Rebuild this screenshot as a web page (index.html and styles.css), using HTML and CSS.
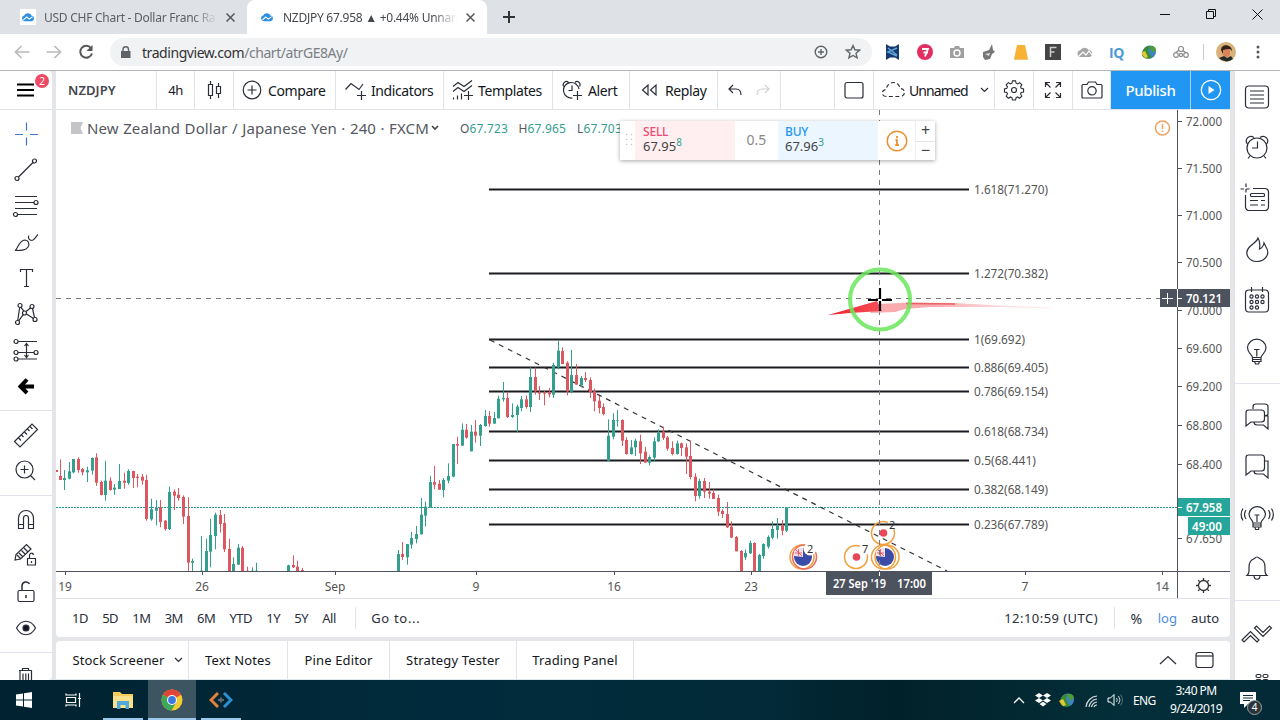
FILE: index.html
```html
<!DOCTYPE html>
<html lang="en">
<head>
    <meta charset="UTF-8">
    <meta name="viewport" content="width=device-width, initial-scale=1.0">
    <title>NZDJPY 67.958 ▲ +0.44% Unnamed</title>
    <link rel="stylesheet" href="styles.css">
</head>
<body>
    <!-- Shared symbols -->
    <svg class="defs" width="0" height="0">
        <symbol id="cloud" viewBox="0 0 16 12">
            <path d="M4 11a3.4 3.4 0 0 1-.6-6.7A4.8 4.8 0 0 1 12.200 4.300 3.400 3.400 0 0 1 12.500 11z" fill="#2f8fe0"/>
            <path d="M2.500 9.500l4-3.500 3 2.500 4-3" fill="none" stroke="#fff" stroke-width="1.300"/>
        </symbol>
        <symbol id="idm" viewBox="0 0 16 16">
            <circle cx="8.500" cy="8" r="6.500" fill="#3d86c6"/>
            <path d="M1 10c0-5 4-8 8-8L7 7l4 7c-5 2-10 0-10-4z" fill="#3c8b34"/>
            <path d="M8 2c4-1 7 1 7 4l-4 3z" fill="#4c9b3c"/>
            <path d="M0 9l4-2 3 6-3 1z" fill="#e5c932"/>
        </symbol>
    </svg>

    <div class="tab-strip">
        <div class="tab">
            <span class="favicon"><svg width="14" height="10"><use href="#cloud"/></svg></span>
            <span class="tab-title">USD CHF Chart - Dollar Franc Rate</span>
            <svg class="close" width="9" height="9"><path d="M.5.5l8 8M8.500.5l-8 8"/></svg>
        </div>
        <div class="tab active">
            <span class="favicon"><svg width="14" height="10"><use href="#cloud"/></svg></span>
            <span class="tab-title">NZDJPY 67.958 ▲ +0.44% Unnamed</span>
            <svg class="close" width="9" height="9"><path d="M.5.5l8 8M8.500.5l-8 8"/></svg>
        </div>
        <svg class="new-tab" width="12" height="12"><path d="M6 0v12M0 6h12"/></svg>
        <div class="window-buttons">
            <svg width="11" height="11"><path d="M0 5.500h10"/></svg>
            <svg width="11" height="11"><path d="M.5 2.500h7v7h-7zM2.500 2.500v-2h7v7h-2"/></svg>
            <svg width="11" height="11"><path d="M.5.500l10 10M10.500.500l-10 10"/></svg>
        </div>
    </div>

    <div class="address-bar">
        <svg class="nav dim" width="16" height="14"><path d="M15.500 7H2M7.500 1L1.500 7l6 6"/></svg>
        <svg class="nav dim" width="16" height="14"><path d="M.5 7H14M8.500 1l6 6-6 6"/></svg>
        <svg class="nav" width="16" height="16"><path d="M13 4A6 6 0 1 0 14 9.500" stroke-width="2"/><path d="M14.500 1v6h-6z" fill="#555" stroke="none"/></svg>
        <div class="url">
            <svg width="10" height="13"><path d="M0 5h9.500v7H0z" fill="#5f6368"/><path d="M2 6V3.500a2.700 2.700 0 0 1 5.500 0V6" fill="none" stroke="#5f6368" stroke-width="1.400"/></svg>
            <span class="address">tradingview.com<span>/chart/atrGE8Ay/</span></span>
            <svg class="zoom-icon" width="14" height="14"><circle cx="7" cy="7" r="5.800"/><path d="M7 4v6M4 7h6"/></svg>
            <svg class="star" width="16" height="16"><path d="M8 1.500l1.900 4.300 4.700.4-3.600 3.100 1.100 4.600L8 11.500l-4.100 2.400L5 9.300 1.400 6.200l4.700-.4z"/></svg>
        </div>
        <div class="extensions">
            <svg width="16" height="16"><path d="M1 0l4 2.500h5L14 0v16l-4-2.500H5L1 16z" fill="#163a6b"/><path d="M3 4l9 7M12 4L3 8l9 4" fill="none" stroke="#5fa3dc" stroke-width="1.500"/></svg>
            <svg width="16" height="16"><circle cx="8" cy="8" r="8" fill="#e22f62"/><path d="M5 5h6L8 12.500M6.500 8.500h4.500" fill="none" stroke="#fff" stroke-width="1.800"/></svg>
            <svg width="16" height="16"><path d="M1 4h4l1-2h4l1 2h4v10H1z" fill="#a0a0a0"/><circle cx="8" cy="9" r="3" fill="none" stroke="#fff" stroke-width="1.400"/></svg>
            <svg width="16" height="16"><path d="M2 8l6-2 3-6 1 6 2 2-3 2-2 5-5 1-2-3z" fill="#777"/><path d="M4 10l5-1-1 3z" fill="#ddd"/></svg>
            <svg width="16" height="16"><path d="M4 1h8l3 14H1z" fill="#f9b233"/><path d="M1 15.500h14" stroke="#e9c37a"/></svg>
            <svg width="16" height="16"><path d="M0 0h16v16H0z" fill="#444"/><path d="M5.500 13V3.500h6M5.500 8h4" fill="none" stroke="#ccc" stroke-width="1.500"/></svg>
            <svg width="16" height="16"><path d="M3.500 13a3.400 3.400 0 0 1-.3-6.700A5 5 0 0 1 12 6.300 3.400 3.400 0 0 1 12.500 13z" fill="#a5a5a5"/><path d="M2 12l4-4 3 3 3-4 3 4" fill="none" stroke="#fff" stroke-width="1.200"/></svg>
            <span class="iq">IQ</span>
            <svg width="16" height="16"><use href="#idm"/></svg>
            <svg width="16" height="16"><g fill="none" stroke="#8d8d8d" stroke-width="1.200"><circle cx="3" cy="11" r="2.300"/><circle cx="8" cy="5" r="2.500"/><circle cx="8" cy="11" r="1.600"/><circle cx="13" cy="11" r="2.300"/><path d="M3 8.500l3-2.500M10 6.500l3 2.500"/></g></svg>
        </div>
        <i class="divider"></i>
        <svg class="avatar" width="20" height="20"><circle cx="10" cy="10" r="10" fill="#d9b27a"/><path d="M5 8c0-7 11-6 11 1l-2-2-6 1-1 4z" fill="#33231b"/><path d="M7 8l7-1v6l-4 3-3-3z" fill="#d88458"/><path d="M3 16l5-2 3 2 4-2 2 3a10 10 0 0 1-14-1z" fill="#232b2c"/></svg>
        <svg class="dots" width="4" height="14"><circle cx="2" cy="2" r="1.500"/><circle cx="2" cy="7" r="1.500"/><circle cx="2" cy="12" r="1.500"/></svg>
    </div>

    <main class="app">
        <!-- Drawing tools -->
        <aside class="tools">
            <div class="menu">
                <svg width="20" height="16"><path d="M1 2.500h17M1 8h17M1 13.500h17" stroke-width="2.200"/></svg>
                <span class="menu-badge">2</span>
            </div>
            <div class="tool-group">
                <svg viewBox="0 0 28 28" class="blue"><path d="M14.500 2.500v8M14.500 17.500v8M3 14.500h8M18 14.500h8"/></svg>
                <svg viewBox="0 0 28 28"><circle cx="5" cy="22.500" r="2"/><circle cx="22.500" cy="5" r="2"/><path d="M6.500 21L21 6.500"/></svg>
                <svg viewBox="0 0 28 28"><path d="M3 4.500h22M3 10.500h19M3 16.500h22M6 22.500h19"/><circle cx="24" cy="10.500" r="2"/><circle cx="3.500" cy="22.500" r="2"/></svg>
                <svg viewBox="0 0 28 28"><path d="M3 22.500c3-1 3-9 9.500-10.500 4 0 5.500 4 3.500 7s-5 3.500-13 3.500zM17 7.500c-1.500 2 0 5 3 5 2 0 3-3 6-6"/></svg>
                <svg viewBox="0 0 28 28"><path d="M8.500 8V5.500h12V8M14.500 5.500v17M12 22.500h5"/></svg>
                <svg viewBox="0 0 28 28"><circle cx="8" cy="5.500" r="2"/><circle cx="20" cy="6.500" r="2"/><circle cx="12.500" cy="13" r="2"/><circle cx="5.500" cy="22.500" r="2"/><circle cx="23" cy="19.500" r="2"/><path d="M7.700 7.500l-2 13M9 7.300l3 4M14 11.500l4.500-3.500M20.500 8.500l2 9M14.500 14l7 4.500M11.200 14.600l-4.500 6.200"/></svg>
                <svg viewBox="0 0 28 28"><circle cx="4" cy="5.500" r="2"/><circle cx="24" cy="16.500" r="2"/><circle cx="4" cy="16.500" r="2"/><circle cx="4" cy="23" r="2"/><path d="M6 5.500h19M6 16.500h16M6 23h19M14.500 8v13M12.500 10l2-2.500 2 2.500M12.500 19l2 2.500 2-2.500"/></svg>
                <svg viewBox="0 0 28 28" class="bold"><path d="M22 14.500H9M15 7.500L8.500 14.500l6.500 6.500"/></svg>
            </div>
            <div class="tool-group">
                <svg viewBox="0 0 28 28"><path d="M2.500 20.500L20 3l5.500 5.500L8 26zM6.500 17l2.500 2.500M9.500 14l2 2M12.500 11l2.500 2.500M15.500 8l2 2M18 5.500l2.500 2.500"/></svg>
                <svg viewBox="0 0 28 28"><circle cx="12.500" cy="12.500" r="8.500"/><path d="M18.500 18.500l4.500 4.500M12.500 8.500v8M8.500 12.500h8"/></svg>
            </div>
            <div class="tool-group">
                <svg viewBox="0 0 28 28"><path d="M6.500 22.500V12a7.500 7.500 0 0 1 15 0v10.500h-5V12a2.500 2.500 0 0 0-5 0v10.500zM6.500 18.500h5M16.500 18.500h5"/></svg>
                <svg viewBox="0 0 28 28"><path d="M3 18l1-5.500L14.500 2.500l4.500 4.500L8.500 17zM5 13l4 4M7 11l4 4M9.500 8.500l4 4M12 6l4 4"/><path d="M15.500 16.500h8v6.500h-8zM17.500 16.500v-3a2 2 0 0 1 4-.5M19.500 19v2"/></svg>
                <svg viewBox="0 0 28 28"><rect x="6" y="12.500" width="16" height="11" rx="1.500"/><path d="M10 12.500V8a4 4 0 0 1 7.500-2M14 17v3" stroke-width="1.500"/></svg>
                <svg viewBox="0 0 28 28"><path d="M4.500 14c5-9 14-9 19 0-5 9-14 9-19 0z"/><circle cx="14" cy="14" r="3" fill="#131722"/></svg>
            </div>
            <div class="tool-group">
                <svg viewBox="0 0 28 28"><path d="M7 7.500h13M10.500 7V5.500h6V7M8 7.500v16h11.500v-16M11 10.500v11M13.800 10.500v11M16.500 10.500v11"/></svg>
            </div>
        </aside>

        <section class="center">
            <div class="toolbar">
                <div class="item symbol">NZDJPY</div>
                <div class="item interval">4h</div>
                <div class="item style">
                    <svg width="16" height="20"><path d="M2.500 4.500h4v11h-4zM4.500 1v3.500M4.500 15.500V19M10.500 6.500h4v7h-4zM12.500 3v3.500M12.500 13.500V18"/></svg>
                </div>
                <div class="item compare">
                    <svg width="20" height="20"><circle cx="10" cy="10" r="8.800"/><path d="M10 5.500v9M5.500 10h9"/></svg>Compare
                </div>
                <div class="item indicators">
                    <svg width="22" height="20"><path d="M.5 9.500l5.500-6 8 6 4-5.500M12 15.500h9M16.500 11v9"/></svg>Indicators
                </div>
                <div class="item templates">
                    <svg width="22" height="20"><path d="M1 6.500l5-4 6 4 8-6M1 11.500l5-4 6 4 8-6M12 15.500h9M16.500 11v9M1.500 17.500v2M5.500 15.500v4M9.500 13.500v6"/></svg>Templates
                </div>
                <div class="item alert">
                    <svg width="22" height="20"><path d="M10.500 18A7.800 7.800 0 1 1 17 9M10 5.500v5H6.500M1.500 6.500C0 3 4 0 6.500 2.500M13 2.500c2.500-2.500 6.500.5 4.500 4M11 15.500h9M15.500 11v9"/></svg>Alert
                </div>
                <div class="item replay">
                    <svg width="17" height="14"><path d="M7 2v10L1.500 7zM15 2v10L9.500 7z"/></svg>Replay
                </div>
                <div class="item history">
                    <svg width="14" height="12"><path d="M5 1L1 5l4 4M1.500 5H8c3 0 5 2 5 6"/></svg>
                    <svg width="14" height="12" class="disabled"><path d="M9 1l4 4-4 4M12.500 5H6c-3 0-5 2-5 6"/></svg>
                </div>
                <div class="item spacer"></div>
                <div class="item icon"><svg width="20" height="18"><rect x="1" y="1.500" width="18" height="15.500" rx="2"/></svg></div>
                <div class="item layout">
                    <svg width="25" height="18"><path d="M5 15.500C0 15 0 9 5 8.500 6 4 9 1.500 12.500 1.500s6 2.500 6.500 6c6 0 6 8 0 8z" stroke-dasharray="4 2.500"/></svg>Unnamed
                    <svg class="chev" width="9" height="6"><path d="M1 1l3.500 3.500L8 1"/></svg>
                </div>
                <div class="item icon"><svg width="22" height="22"><circle cx="11" cy="11" r="2.500"/><path d="M9.300 1.500h3.400l.6 2.600 1.600.7 2.300-1.400 2.400 2.400-1.400 2.300.7 1.600 2.600.6v3.400l-2.600.6-.7 1.600 1.400 2.300-2.400 2.400-2.300-1.400-1.600.7-.6 2.600H9.300l-.6-2.600-1.600-.7-2.300 1.400-2.400-2.400 1.400-2.300-.7-1.600-2.600-.6v-3.400l2.600-.6.7-1.600-1.400-2.300 2.400-2.400 2.300 1.400 1.600-.7z" transform="translate(1 .500) scale(.91)"/></svg></div>
                <div class="item icon"><svg width="18" height="18"><path d="M1.500 6V1.500H6M1.500 1.500L6.500 6.500M12 1.500h4.500V6M16.500 1.500l-5 5M1.500 12v4.500H6M1.500 16.500l5-5M12 16.500h4.500V12M16.500 16.500l-5-5"/></svg></div>
                <div class="item icon last"><svg width="22" height="18"><path d="M1 4.500q0-1 1-1h4L7.500 1h7L16 3.500h4q1 0 1 1V16q0 1-1 1H2q-1 0-1-1z"/><circle cx="11" cy="9.800" r="4.200"/></svg></div>
                <div class="publish">Publish</div>
                <div class="play"><svg width="22" height="22"><circle cx="11" cy="11" r="9.700" fill="none" stroke="#fff" stroke-width="1.300"/><path d="M8.500 7l6 4-6 4z" fill="#fff"/></svg></div>
            </div>

            <div class="chart">
                <svg class="plot" viewBox="56 110 1174 488" width="1174" height="488">
                    <defs>
                        <linearGradient id="tip"><stop offset="0" stop-color="#f0202c"/><stop offset="1" stop-color="#f6505a"/></linearGradient>
                        <linearGradient id="trail"><stop offset="0" stop-color="#f58f92"/><stop offset=".35" stop-color="#f88d92"/><stop offset="1" stop-color="#fcc9c9" stop-opacity=".4"/></linearGradient>
                        <g id="nz"><circle r="9" fill="#3b4ba8"/><path d="M-9-1V-6l6-3H0V0z" fill="#f3dfe4"/><path d="M-8-4h7M-4.500-8v7M-7-7l6 6" stroke="#dc4a60" stroke-width=".8"/><circle cx="-9" cy="-1" r=".01"/></g>
                    </defs>
                    <line x1="56" x2="1177" y1="507.500" y2="507.500" class="last-line"/>
                    <g id="fib"></g>
                    <path class="trend" d="M490 340L947 571"/>
                    <g id="candles"></g>

                    <g class="events">
                        <circle cx="802" cy="557" r="12" class="ring"/><circle cx="804.500" cy="557" r="12" class="ring red"/>
                        <use href="#nz" x="803" y="557"/><circle cx="810" cy="549" r="6.500" class="clear"/><text x="807" y="553">2</text>
                        <circle cx="856" cy="557" r="11.500" class="ring"/><circle cx="856.500" cy="557" r="3.800" class="sun"/>
                        <circle cx="865" cy="549" r="6" class="clear"/><text x="862" y="553">7</text>
                        <circle cx="883" cy="533" r="11.500" class="ring"/><circle cx="883.500" cy="533" r="3.800" class="sun"/>
                        <circle cx="892" cy="525" r="5" class="clear"/><path d="M887 524.500h10" class="fib-line"/><text x="889" y="529">2</text>
                        <circle cx="883.500" cy="557" r="12" class="ring"/><circle cx="887" cy="557" r="12" class="ring"/><use href="#nz" x="885" y="557"/>
                    </g>

                    <!-- Crosshair and pointer -->
                    <path class="cross" d="M879.500 110V571M56 298.500H1160"/>
                    <path d="M878 304L910 302.500 955 303 1000 305.500 1050 307.500V308.500L1000 307 930 307 905 309 895 312 870 313z" fill="url(#trail)" fill-opacity=".75"/>
                    <path d="M828 315L877 301 882 311 850 313z" fill="url(#tip)"/>
                    <path d="M906 303.500l49 .5" stroke="#e8606a" stroke-width="1.500"/>
                    <circle cx="880" cy="299.500" r="30" class="halo"/>
                    <path d="M880 288v23M868 300h24" stroke="#000" stroke-width="2.200"/><path d="M878 300h4" stroke="#fff" stroke-width="2"/>

                    <path class="axis" d="M56 571.500H1230M1177.500 110V598"/>
                    <g id="price-axis"></g>
                    <g id="time-axis"></g>

                    <rect x="1160" y="289" width="70" height="18" fill="#4c525e"/>
                    <path d="M1162 298.500h11M1167.500 293v11M1178 298.500h4" stroke="#fff"/><path d="M1177.500 289v18" stroke="#fff"/>
                    <text class="tag" x="1186" y="302.500" textLength="36" lengthAdjust="spacingAndGlyphs">70.121</text>
                    <rect x="1178" y="498" width="52" height="18" fill="#26a69a"/><path d="M1178 507.500h4" stroke="#fff"/>
                    <text class="tag" x="1186" y="511.500" textLength="36" lengthAdjust="spacingAndGlyphs">67.958</text>
                    <rect x="1188" y="517" width="42" height="18" fill="#26a69a"/>
                    <text class="tag" x="1192" y="530.500" textLength="30" lengthAdjust="spacingAndGlyphs">49:00</text>
                    <rect x="826" y="572" width="106" height="23" fill="#4c525e"/><path d="M879.500 572v4" stroke="#fff"/>
                    <text class="tag" x="833" y="588" textLength="53" lengthAdjust="spacingAndGlyphs">27 Sep '19</text>
                    <text class="tag" x="897" y="588" textLength="29" lengthAdjust="spacingAndGlyphs">17:00</text>

                    <g class="sun-icon"><circle cx="1203.500" cy="585.500" r="5"/><path d="M1203.500 578v2M1203.500 591v2M1196 585.500h2M1209 585.500h2M1198.200 580.200l1.400 1.400M1207.400 589.400l1.400 1.400M1208.800 580.200l-1.400 1.400M1199.600 589.400l-1.400 1.400"/></g>
                    <circle cx="1162.500" cy="128" r="7" class="warn"/><path d="M1162.500 124v5M1162.500 130.500v1.500" class="warn"/>
                </svg>

                <div class="legend">
                    <span class="flag"></span>
                    <span class="pair">New Zealand Dollar / Japanese Yen · 240 · FXCM</span>
                    <svg width="8" height="6"><path d="M1 1l3 3 3-3" fill="none" stroke="#444" stroke-width="1.600"/></svg>
                    <span class="ohlc">O<b>67.723</b></span>
                    <span class="ohlc">H<b>67.965</b></span>
                    <span class="ohlc cut">L<b>67.703</b></span>
                </div>

                <div class="order-panel">
                    <div class="grip"></div>
                    <div class="side sell"><span>SELL</span><div>67.95<sup>8</sup></div></div>
                    <div class="qty">0.5</div>
                    <div class="side buy"><span>BUY</span><div>67.96<sup>3</sup></div></div>
                    <div class="info"><svg width="22" height="22"><circle cx="11" cy="11" r="9.800" fill="none" stroke="#ef8e2f" stroke-width="1.500"/><path d="M11 6v2.200M11 9.500V15M9.500 10h1.500M9.300 15h3.600" stroke="#ef8e2f" stroke-width="1.800"/></svg></div>
                    <div class="steps"><span>+</span><span>−</span></div>
                </div>
            </div>

            <div class="ranges">
                <span>1D</span><span>5D</span><span>1M</span><span>3M</span><span>6M</span><span>YTD</span><span>1Y</span><span>5Y</span><span>All</span>
                <i class="after-all"></i>
                <span class="goto">Go to...</span>
                <span class="utc">12:10:59 (UTC)</span>
                <i></i>
                <span class="percent">%</span><span class="log">log</span><span class="auto">auto</span>
            </div>

            <div class="panels">
                <div class="panel screener">Stock Screener <svg width="9" height="6"><path d="M1 1l3.500 3.500L8 1"/></svg></div>
                <div class="panel notes">Text Notes</div>
                <div class="panel pine">Pine Editor</div>
                <div class="panel tester">Strategy Tester</div>
                <div class="panel trading">Trading Panel</div>
                <div class="panel-actions">
                    <svg width="18" height="10"><path d="M1 9l8-7.500L17 9"/></svg>
                    <svg width="19" height="18"><rect x="1" y="1.500" width="17" height="15" rx="2.500"/><path d="M1 5h17"/></svg>
                </div>
            </div>
        </section>

        <!-- Widget bar -->
        <aside class="widgets">
            <div class="widget-group">
                <svg viewBox="0 0 28 28"><rect x="2.500" y="3" width="23" height="22" rx="3.500"/><path d="M7 8h14M7 12h14M7 16h14M7 20h14"/></svg>
                <svg viewBox="0 0 28 28"><circle cx="14" cy="14" r="10"/><path d="M14.500 7.500V14H9M4.500 10C1 6 6 0 11 3.500M17 3.500c5-3.500 10 2.500 6.500 6.500M7 22l-2 2.500M21 22l2 2.500"/></svg>
                <svg viewBox="0 0 28 28"><path d="M3-1.500v11M-2.500 4h11" stroke-dasharray="3.500 2"/><path d="M10 3.500h12a3.500 3.500 0 0 1 3.500 3.500v15a3.500 3.500 0 0 1-3.500 3.500H6A3.500 3.500 0 0 1 2.500 22V10"/><rect x="7.500" y="8.500" width="14" height="3" rx="1"/><path d="M7 15.500h8M18 15.500h4M7 20h8M18 20h4"/></svg>
                <svg viewBox="0 0 28 28"><path d="M15 2C14 6 9 8 6 11.500c-5 6-.5 14 8 14s13.500-8 9-14.500l-2-4c-.5 3-2 5-4.500 6 .5-3 1-7-1.500-11z"/></svg>
                <svg viewBox="0 0 28 28"><rect x="2.500" y="3" width="23" height="22" rx="3.500"/><path d="M8.500 0v5M19.500 0v5"/><g><circle cx="8.500" cy="9.500" r="1.600"/><circle cx="14" cy="9.500" r="1.600"/><circle cx="19.500" cy="9.500" r="1.600"/><circle cx="8.500" cy="15" r="1.600"/><circle cx="14" cy="15" r="1.600"/><circle cx="19.500" cy="15" r="1.600"/><circle cx="8.500" cy="20.500" r="1.600"/><circle cx="14" cy="20.500" r="1.600"/></g></svg>
                <svg viewBox="0 0 28 28"><path d="M9.500 19.500c0-3-5-4-5-10a9.300 9.300 0 0 1 18.500 0c0 6-5 7-5 10zM9.500 19.500v4h8.500v-4M9.500 21.500H18M11.500 23.500l1 2.500h3l1-2.500M11 11.500h5.500M13.800 11.500v7"/></svg>
            </div>
            <div class="widget-group">
                <svg viewBox="0 0 28 28"><path d="M10 7V5q0-3 3-3h9q3 0 3 3v7q0 1.500-3 1.500h-1M5.500 8h13q3 0 3 3v6q0 3-3 3H8l-5 4V11q0-3 2.500-3zM21.500 14h3.500v13l-4.500-4H14q-3 0-3-3"/></svg>
                <svg viewBox="0 0 28 28"><path d="M5.500 2h13q3 0 3 3v10q0 3-3 3H8l-5 4V5q0-3 2.500-3zM21.500 8h3.500v17l-4.500-4H14q-3 0-3-3"/></svg>
                <svg viewBox="0 0 32 28" class="wide"><path d="M12 19c0-3-4-4-4-9a8.300 8.300 0 0 1 16.500 0c0 5-4.500 6-4.500 9zM12 19v4h8v-4M12 21h8M14 23l.5 2.500h3L18 23M13.500 11h5M16 11v7M5 6c-2 3-2 6 0 9M2 4.500c-2.500 4-2.500 8 0 12M27.500 6c2 3 2 6 0 9M30.500 4.500c2.500 4 2.500 8 0 12"/></svg>
                <svg viewBox="0 0 28 28"><path d="M4 20.500q2-1.500 2-4.500v-4c0-6 4-8 5.500-8.500q2.500-3 5 0C18 4 22 6 22 12v4q0 3 2 4.500zM11 20.500c0 5 6 5 6 0"/></svg>
            </div>
            <div class="widget-group">
                <svg viewBox="0 0 32 28" class="wide"><path d="M1 21l8.500-8.500L18 21l-2 2-6.500-6.500L3 23zM13.500 9l2-2 6.500 6.500L28.500 7l2 2-8.500 8.500z"/></svg>
                <svg viewBox="0 0 28 28"><rect x="13" y="4.500" width="5" height="3" rx="1.500"/><rect x="20" y="4.500" width="5" height="3" rx="1.500"/><rect x="13" y="9.500" width="5" height="3" rx="1.500"/><rect x="20" y="9.500" width="5" height="3" rx="1.500"/></svg>
            </div>
        </aside>
    </main>

    <footer class="taskbar">
        <div class="task"><svg width="16" height="16"><path d="M0 2.500l7-1v6H0zM8 1.300L16 0v7.500H8zM0 8.500h7v6l-7-1zM8 8.500h8V16l-8-1.300z" fill="#fff"/></svg></div>
        <div class="task"><svg width="17" height="16"><path d="M1 1.500V3h10V1.500M1 14.500V13h10v1.500M1.500 5.500h9v5h-9zM14.500 1v14M13 6.500h3" fill="none" stroke="#fff" stroke-width="1.200"/></svg></div>
        <div class="task open"><svg width="22" height="20"><path d="M1 2h7l2 2h11v14H1z" fill="#f3cc5c"/><path d="M1 6h20v12H1z" fill="#fbe08c"/><path d="M5 19v-8h12v8h-3.500v-4h-5v4z" fill="#4fa9dc"/></svg></div>
        <div class="task open current"><svg width="22" height="22"><circle cx="11" cy="11" r="10.500" fill="#f5c930"/><path d="M11 11L1.900 5.750A10.500 10.500 0 0 1 20.100 5.750L11 6z" fill="#e0453a"/><path d="M11 11L1.900 5.750A10.500 10.500 0 0 0 10.500 21.500L15.500 13z" fill="#3fa757"/><path d="M20.100 5.750H11V11z" fill="#e0453a"/><circle cx="11" cy="11" r="5" fill="#fff"/><circle cx="11" cy="11" r="3.900" fill="#3b78e0"/></svg></div>
        <div class="task open"><svg width="24" height="18"><path d="M9 2L2 9l7 7" fill="none" stroke="#e4803a" stroke-width="3"/><path d="M15 2l7 7-7 7" fill="none" stroke="#2d8fd0" stroke-width="3"/><path d="M9 9h6M12 6.500v5" stroke="#62676c" stroke-width="2"/></svg></div>
        <div class="tray">
            <svg width="12" height="8"><path d="M1 7l5-5 5 5" fill="none" stroke="#fff" stroke-width="1.300"/></svg>
            <svg width="16" height="14"><path d="M4 0l4 2.500L4 5 0 2.500zM12 0l4 2.500L12 5 8 2.500zM4 5l4 2.500L4 10 0 7.500zM12 5l4 2.500-4 2.500-4-2.500zM8 8.700l3.500 2.300L8 13.500 4.500 11z" fill="#fff"/></svg>
            <svg width="16" height="16"><use href="#idm"/></svg>
            <svg width="16" height="16"><path d="M3 15A12 12 0 0 1 14 4M6 15A9 9 0 0 1 14 7M8.500 15A6.500 6.500 0 0 1 14 10M11 15a3 3 0 0 1 3-2" fill="none" stroke="#d5dde0" stroke-width="1.200"/></svg>
            <svg width="16" height="14"><path d="M1 5h2.500L7 1.500v11L3.500 9H1z" fill="none" stroke="#fff"/><path d="M9.500 5q1.500 2 0 4M11.500 3q3 4 0 8" fill="none" stroke="#cdd6da"/><path d="M13.500 1.500q4 5.500 0 11" fill="none" stroke="#56707a"/></svg>
            <span class="lang">ENG</span>
            <div class="clock"><div>3:40 PM</div><div>9/24/2019</div></div>
            <div class="notifications">
                <svg width="17" height="17"><path d="M0 0h16v12h-8l-4 4v-4H0z" fill="#fff"/><path d="M3 3.500h10M3 6h10M3 8.500h7" stroke="#0b2c38"/></svg>
                <span>4</span>
            </div>
        </div>
    </footer>

    <script src="script.js"></script>
</body>
</html>
```

FILE: styles.css
```css
:root {
    --text: #131722;
    --line: #e0e3eb;
    --gap: #e3e5e8;
    --green: #33a08f;
    --red: #dc5860;
    --blue: #2196f3;
    --ui: "Noto Sans", "Open Sans", sans-serif;
}

* {
    margin: 0;
    padding: 0;
    box-sizing: border-box;
}

body {
    width: 1280px;
    height: 720px;
    display: flex;
    flex-direction: column;
    overflow: hidden;
    font-family: var(--ui);
    font-size: 13px;
    color: var(--text);
    background: #fff;
}

svg {
    flex: none;
    display: block;
}

.defs {
    position: absolute;
}

/* Browser tabs */
.tab-strip {
    flex: none;
    height: 34px;
    display: flex;
    background: #dee1e6;
}

.tab {
    width: 240px;
    padding: 0 12px 0 12px;
    display: flex;
    align-items: center;
    color: #5b5e62;
    font-size: 12px;
}

.tab:first-child {
    width: 247px;
    padding-left: 20px;
}

.tab.active {
    background: #fff;
    border-radius: 8px 8px 0 0;
    color: #45484c;
}

.favicon {
    flex: none;
    width: 16px;
    height: 16px;
    margin-right: 8px;
    display: flex;
    align-items: center;
    justify-content: center;
    background: #fff;
}

.tab-title {
    width: 175px;
    overflow: hidden;
    white-space: nowrap;
    letter-spacing: -0.26px;
    -webkit-mask-image: linear-gradient(90deg, #000 86%, transparent);
    mask-image: linear-gradient(90deg, #000 86%, transparent);
}

.close {
    margin-left: 9px;
    stroke: #55585c;
    stroke-width: 1.5;
}

.new-tab {
    align-self: center;
    margin-left: 16px;
    stroke: #333;
    stroke-width: 2;
}

.window-buttons {
    margin: 9px 17px 0 auto;
    display: flex;
    gap: 35px;
    fill: none;
    stroke: #111;
}

/* Address bar */
.address-bar {
    flex: none;
    height: 37px;
    padding: 0 20px 0 14px;
    display: flex;
    align-items: center;
    border-bottom: 1px solid #b4b5b8;
}

.nav {
    margin-right: 16px;
    fill: none;
    stroke: #55585c;
    stroke-width: 1.7;
}

.nav.dim {
    stroke: #bbb;
}

.url {
    width: 762px;
    height: 28px;
    margin-right: 13px;
    padding: 0 11px;
    display: flex;
    align-items: center;
    border-radius: 14px;
    background: #f0f2f4;
    font-size: 14px;
}

.address {
    margin-left: 11px;
    letter-spacing: -0.44px;
    color: #333;
}

.address span {
    color: #7b7f84;
}

.zoom-icon,
.star {
    fill: none;
    stroke: #606468;
    stroke-width: 1.4;
}

.zoom-icon {
    margin-left: auto;
    margin-right: 17px;
}

.extensions {
    width: 304px;
    display: flex;
    align-items: center;
    justify-content: space-between;
}

.iq {
    width: 16px;
    font: bold 14px "Open Sans", sans-serif;
    color: #4b9ad6;
    letter-spacing: -0.5px;
}

.divider {
    width: 1px;
    height: 16px;
    margin: 0 12px 0 14px;
    background: #ccc;
}

.dots {
    margin-left: auto;
    fill: #55585c;
}

/* Application frame */
.app {
    height: 609px;
    display: flex;
    gap: 4px;
    background: var(--gap);
    overflow: hidden;
}

.tools,
.widgets {
    flex: none;
    display: flex;
    flex-direction: column;
    align-items: center;
    background: #fff;
    fill: none;
    stroke: #2a2e39;
    stroke-width: 1.2;
}

.tools {
    width: 52px;
    border-radius: 0 4px 4px 0;
}

.menu {
    position: relative;
    width: 52px;
    height: 39px;
    margin-bottom: 6px;
    padding: 11px 16px;
    border-bottom: 1px solid var(--line);
    stroke: #000;
}

.menu-badge {
    position: absolute;
    top: 3px;
    left: 35px;
    width: 14px;
    height: 14px;
    border-radius: 7px;
    background: #ee4a66;
    color: #fff;
    font-size: 10px;
    line-height: 14px;
    text-align: center;
}

.tool-group {
    width: 52px;
    display: flex;
    flex-direction: column;
    align-items: center;
}

.tool-group + .tool-group {
    margin-top: 6px;
    padding-top: 6px;
    border-top: 1px solid var(--line);
}

.tool-group svg {
    width: 28px;
    height: 28px;
    margin: 4px 0;
}

.tool-group .blue {
    stroke: #3f78c9;
}

.tool-group .bold {
    stroke: #000;
    stroke-width: 4;
}

.widgets {
    width: 45px;
    margin-left: 1px;
}

.widget-group {
    width: 45px;
    display: flex;
    flex-direction: column;
    align-items: center;
}

.widget-group + .widget-group {
    margin-top: 6px;
    padding-top: 6px;
    border-top: 1px solid var(--line);
}

.widget-group svg {
    width: 28px;
    height: 28px;
    margin: 11.5px 0;
    position: relative;
    left: -1px;
    overflow: visible;
}

.widget-group svg.wide {
    width: 32px;
}

.center {
    width: 1174px;
    display: flex;
    flex-direction: column;
}

/* Chart toolbar */
.toolbar {
    flex: none;
    height: 39px;
    display: flex;
    background: #fff;
    border-bottom: 1px solid var(--line);
    font-size: 14px;
    letter-spacing: -0.4px;
}

.item {
    flex: none;
    display: flex;
    align-items: center;
    border-right: 1px solid var(--line);
}

.item svg {
    fill: none;
    stroke: #2a2e39;
    stroke-width: 1.2;
}

.symbol {
    width: 101px;
    padding-left: 12px;
    font-size: 13px;
    font-weight: 600;
    letter-spacing: 0.1px;
    color: #43464d;
}

.interval {
    width: 38px;
    justify-content: center;
    font-size: 13px;
}

.style {
    width: 39px;
    justify-content: center;
}

.compare {
    width: 102px;
    padding-left: 8px;
    gap: 6px;
}

.indicators {
    width: 108px;
    padding-left: 9px;
    gap: 4px;
}

.templates {
    width: 109px;
    padding-left: 8px;
    gap: 4px;
}

.alert {
    width: 77px;
    padding-left: 9px;
    gap: 4px;
}

.replay {
    width: 88px;
    padding-left: 11px;
    gap: 7px;
}

.history {
    width: 63px;
    padding-left: 10px;
    gap: 14px;
}

.item .disabled {
    stroke: #d0d2d6;
}

.spacer {
    width: 54px;
}

.icon {
    width: 39px;
    justify-content: center;
}

.icon.last {
    width: 38px;
}

.layout {
    width: 121px;
    padding-left: 7px;
    gap: 3px;
    letter-spacing: -0.9px;
}

.layout .chev {
    margin-left: 9px;
}

.publish,
.play {
    display: flex;
    align-items: center;
    justify-content: center;
    background: var(--blue);
    color: #fff;
}

.publish {
    width: 80px;
    font-size: 15px;
    font-weight: 500;
    border-right: 1px solid #a5d2f8;
}

.play {
    flex: 1;
}

/* Chart */
.chart {
    position: relative;
    flex: none;
    height: 489px;
    background: #fff;
    border-bottom: 1px solid var(--line);
}

.plot text {
    font-family: var(--ui);
    font-size: 12px;
    fill: #555;
}

.plot .tag {
    fill: #fff;
    font-weight: 600;
}

.fib-line {
    stroke: #1c1c20;
    stroke-width: 2;
}

.trend {
    fill: none;
    stroke: #333;
    stroke-width: 1.2;
    stroke-dasharray: 5 5;
}

.last-line {
    stroke: #1f9c8c;
    stroke-dasharray: 2 1;
}

.axis,
.tick {
    fill: none;
    stroke: #50535e;
}

.cross {
    fill: none;
    stroke: #777a80;
    stroke-dasharray: 5 5;
}

.halo {
    fill: none;
    stroke: #6be65c;
    stroke-width: 4.2;
    stroke-opacity: 0.85;
}

.up {
    fill: var(--green);
}

.down {
    fill: var(--red);
}

.ring {
    fill: none;
    stroke: #f0a03c;
    stroke-width: 1.5;
}

.ring.red {
    stroke: #ec6a58;
}

.sun {
    fill: #e9485a;
}

.clear {
    fill: #fff;
}

.events text {
    font-size: 11px;
    fill: #333;
}

.sun-icon {
    fill: none;
    stroke: #333;
    stroke-width: 1.3;
}

.warn {
    fill: none;
    stroke: #f0a263;
    stroke-width: 1.5;
}

.legend {
    position: absolute;
    left: 15px;
    top: 7px;
    height: 22px;
    display: flex;
    align-items: center;
    white-space: nowrap;
    color: #55585f;
}

.flag {
    width: 12px;
    height: 12px;
    margin-right: 4px;
    background: #c3c5c8;
    clip-path: polygon(0 0, 100% 0, 80% 50%, 100% 100%, 0 100%);
}

.pair {
    width: 341px;
    font-size: 15px;
    letter-spacing: 0.1px;
    word-spacing: 0.5px;
}

.legend svg {
    margin: 0 21px 0 3px;
}

.ohlc {
    width: 58.5px;
    padding-top: 1px;
    font-size: 12px;
    letter-spacing: 0.15px;
}

.ohlc.cut {
    width: 43px;
    overflow: hidden;
}

.ohlc b {
    font-weight: normal;
    color: var(--green);
}

.order-panel {
    position: absolute;
    left: 564px;
    top: 11px;
    width: 315px;
    height: 39px;
    display: flex;
    background: #fff;
    box-shadow: 0 1px 4px rgba(0, 0, 0, 0.35);
}

.grip {
    width: 15px;
    margin: 11px 0;
    background: radial-gradient(circle, #ccc 0.7px, transparent 1.1px) 4px 0 / 5px 5px;
    clip-path: inset(0 2px 0 4px);
}

.side {
    width: 100px;
    padding: 3px 7px;
    font-size: 13px;
    line-height: 15px;
    color: #444;
}

.side span {
    font-size: 12px;
    font-weight: 500;
    letter-spacing: -0.2px;
}

.sell {
    padding-left: 8px;
    background: #ffeff0;
}

.sell span {
    color: #ee4a78;
}

.buy {
    background: #ebf6fe;
}

.buy span {
    color: var(--blue);
}

.side sup {
    font-size: 10px;
    line-height: 0;
    color: var(--green);
}

.qty {
    width: 43px;
    line-height: 38px;
    text-align: center;
    font-size: 14px;
    color: #888;
}

.info {
    width: 37px;
    display: flex;
    align-items: center;
    justify-content: center;
}

.steps {
    flex: 1;
    border-left: 1px solid #eee;
}

.steps span {
    display: block;
    height: 20px;
    font-size: 16px;
    line-height: 19px;
    text-align: center;
    color: #444;
}

.steps span + span {
    border-top: 1px solid #e5e5e5;
    line-height: 16px;
}

/* Date ranges */
.ranges {
    flex: none;
    height: 38px;
    margin-bottom: 4px;
    padding: 0 11px 0 16px;
    display: flex;
    align-items: center;
    gap: 14.2px;
    background: #fff;
    border-radius: 0 0 4px 4px;
    font-size: 13px;
    letter-spacing: -0.5px;
    color: #2a2e39;
}

.ranges i {
    width: 1px;
    height: 22px;
    background: var(--line);
}

.ranges .after-all {
    margin-left: 5px;
}

.goto {
    margin-left: 1px;
    letter-spacing: 0.7px;
}

.utc {
    margin-left: auto;
    margin-right: 2px;
    letter-spacing: 0.45px;
}

.percent {
    margin-left: 1px;
    font-size: 14px;
}

.log {
    margin-left: 2px;
    color: #4a8fe0;
    letter-spacing: 0;
}

.auto {
    letter-spacing: 0;
}

/* Bottom panels */
.panels {
    flex: none;
    height: 39px;
    display: flex;
    background: #fff;
    border-radius: 4px 4px 0 0;
    border-bottom: 1px solid #dfe9f2;
    font-size: 13px;
    letter-spacing: 0.15px;
}

.panels svg {
    fill: none;
    stroke: #2a2e39;
    stroke-width: 1.2;
}

.panel {
    display: flex;
    align-items: center;
    justify-content: center;
    border-right: 1px solid var(--line);
}

.screener {
    width: 133px;
    gap: 9px;
    padding-left: 11px;
}

.notes {
    width: 99px;
}

.pine {
    width: 102px;
}

.tester {
    width: 127px;
}

.trading {
    width: 117px;
}

.panel-actions {
    margin: 0 16px 0 auto;
    display: flex;
    align-items: center;
    gap: 18px;
}

/* Windows taskbar */
.taskbar {
    flex: none;
    height: 40px;
    display: flex;
    background: linear-gradient(90deg, #012230 0%, #012b3c 35%, #022a38 60%, #012129 70%, #042f3a 88%, #032a36 100%);
    color: #fff;
    font-size: 12px;
}

.task {
    width: 48px;
    margin-right: 1.3px;
    display: flex;
    align-items: center;
    justify-content: center;
    background: linear-gradient(#9cc8ee, #9cc8ee) no-repeat center bottom / 0 2px;
}

.task.open {
    background-size: 40px 2px;
}

.task.current {
    background-size: 48px 2px;
    background-color: #3c5560;
}

.tray {
    margin-left: auto;
    padding-right: 23px;
    display: flex;
    align-items: center;
    gap: 8px;
}

.tray > svg:first-child {
    margin-right: 2px;
}

.lang {
    width: 26px;
    margin-left: 2px;
    letter-spacing: -0.7px;
}

.clock {
    width: 64px;
    margin-left: -3px;
    font-size: 12px;
    line-height: 18px;
    text-align: center;
    letter-spacing: -0.55px;
}

.notifications {
    position: relative;
    margin-left: 4px;
}

.notifications span {
    position: absolute;
    left: 7px;
    top: 8px;
    width: 15px;
    height: 15px;
    border: 1px solid #9aa4a8;
    border-radius: 8px;
    background: #2a3439;
    font-size: 10px;
    line-height: 13px;
    text-align: center;
}
```

FILE: script.js
```javascript
const NS = 'http://www.w3.org/2000/svg';

function add(parent, tag, attrs, text) {
    const el = document.createElementNS(NS, tag);
    for (const key in attrs) el.setAttribute(key, attrs[key]);
    if (text) el.textContent = text;
    document.getElementById(parent).appendChild(el);
}

// Fibonacci levels: [y, label, label width]
const levels = [
    [189.5, '1.618(71.270)', 74], [273.5, '1.272(70.382)', 74], [339.5, '1(69.692)', 51],
    [367.5, '0.886(69.405)', 74], [391.5, '0.786(69.154)', 74], [431.5, '0.618(68.734)', 74],
    [460.5, '0.5(68.441)', 62], [489.5, '0.382(68.149)', 74], [524.5, '0.236(67.789)', 74]
];
levels.forEach(([y, label, width]) => {
    add('fib', 'line', { x1: 489, x2: 969, y1: y, y2: y, class: 'fib-line' });
    add('fib', 'text', { x: 974, y: y + 4.500, textLength: width, lengthAdjust: 'spacingAndGlyphs' }, label);
});

// Price axis
const prices = [
    ['72.000', 121], ['71.500', 168], ['71.000', 215], ['70.500', 262], ['70.000', 310],
    ['69.600', 348], ['69.200', 386], ['68.800', 425], ['68.400', 464], ['67.650', 538]
];
prices.forEach(([label, y]) => {
    add('price-axis', 'line', { x1: 1178, x2: 1182, y1: y + 0.5, y2: y + 0.5, class: 'tick' });
    add('price-axis', 'text', { x: 1186, y: y + 5, textLength: 36, lengthAdjust: 'spacingAndGlyphs' }, label);
});

// Time axis
const dates = [['19', 65], ['26', 202], ['Sep', 335], ['9', 476], ['16', 614], ['23', 751], ['7', 1025], ['14', 1162]];
dates.forEach(([label, x]) => {
    add('time-axis', 'line', { x1: x + 0.5, x2: x + 0.5, y1: 572, y2: 575, class: 'tick' });
    add('time-axis', 'text', { x: x, y: 591, 'text-anchor': 'middle' }, label);
});

// Candles: [x, high, body top, body bottom, low, up], in thirds of a pixel from the origin
const august = [
    [20, 90, 90, 96, 96, 0], [32, 58, 108, 120, 120, 0], [44, 90, 114, 120, 150, 1], [58, 66, 94, 116, 118, 1],
    [71, 57, 57, 97, 100, 1], [86, 52, 57, 90, 98, 0], [98, 84, 87, 97, 106, 0], [112, 80, 91, 97, 126, 1],
    [128, 52, 54, 92, 104, 1], [140, 40, 52, 128, 138, 0], [155, 122, 126, 165, 166, 0], [167, 62, 122, 165, 182, 1],
    [182, 112, 122, 150, 152, 0], [194, 132, 143, 149, 164, 1], [208, 72, 123, 147, 147, 1], [223, 98, 122, 128, 146, 0],
    [236, 88, 93, 129, 134, 1], [250, 92, 93, 114, 144, 0], [263, 102, 110, 114, 142, 0], [278, 102, 110, 122, 134, 0],
    [290, 104, 120, 237, 242, 0], [305, 176, 208, 238, 242, 1], [320, 180, 203, 212, 256, 1], [332, 180, 201, 246, 262, 0],
    [347, 240, 242, 267, 272, 0], [359, 140, 156, 267, 270, 1], [374, 148, 155, 167, 210, 0], [386, 144, 164, 174, 182, 0],
    [401, 166, 171, 230, 252, 0], [416, 172, 228, 368, 393, 0], [428, 356, 363, 368, 393, 1], [455, 288, 392, 393, 393, 1],
    [470, 296, 333, 393, 393, 1], [482, 236, 285, 335, 382, 1], [497, 218, 224, 288, 328, 1], [512, 210, 225, 252, 278, 0],
    [524, 222, 249, 328, 336, 0], [539, 296, 327, 393, 393, 0], [551, 352, 372, 393, 393, 1], [566, 312, 323, 374, 374, 1],
    [578, 318, 323, 393, 393, 0], [593, 380, 392, 393, 393, 0], [608, 382, 392, 393, 393, 1], [620, 368, 392, 393, 393, 1],
    [716, 374, 376, 393, 393, 1], [731, 346, 375, 382, 384, 0], [743, 362, 380, 393, 393, 0], [758, 384, 390, 393, 393, 0],
    [1046, 330, 342, 393, 393, 1]
];

const september = [
    [8, 636, 672, 681, 690, 0], [23, 642, 642, 682, 704, 1], [35, 606, 624, 644, 656, 1], [50, 588, 612, 627, 640, 1],
    [65, 504, 554, 613, 613, 1], [77, 515, 530, 557, 590, 1], [92, 438, 456, 532, 532, 1], [104, 408, 456, 464, 478, 0],
    [119, 450, 461, 479, 479, 0], [130, 444, 450, 480, 502, 1], [146, 400, 438, 452, 460, 1], [161, 342, 342, 440, 442, 1],
    [173, 320, 342, 347, 402, 0], [188, 280, 299, 347, 347, 1], [200, 282, 299, 323, 326, 0], [215, 285, 305, 364, 364, 1],
    [227, 270, 305, 317, 338, 0], [242, 282, 285, 317, 348, 1], [257, 240, 258, 288, 290, 1], [269, 243, 258, 281, 290, 0],
    [284, 246, 264, 281, 281, 1], [296, 197, 206, 265, 265, 1], [311, 156, 204, 208, 215, 1], [323, 185, 204, 261, 264, 0],
    [338, 220, 255, 261, 264, 1], [352, 224, 230, 255, 309, 1], [365, 198, 208, 234, 244, 1], [379, 196, 208, 231, 236, 0],
    [392, 112, 141, 231, 246, 1], [407, 113, 141, 184, 194, 0], [419, 168, 187, 191, 210, 0], [434, 182, 187, 191, 226, 0],
    [449, 174, 187, 193, 202, 0], [461, 98, 105, 194, 204, 1], [476, 32, 62, 112, 118, 1], [488, 52, 63, 102, 102, 0],
    [503, 94, 98, 184, 196, 0], [515, 60, 135, 185, 190, 1], [530, 102, 135, 164, 164, 0], [545, 138, 144, 166, 172, 1],
    [557, 126, 144, 150, 156, 0], [572, 142, 150, 186, 204, 0], [584, 176, 184, 214, 244, 0], [599, 198, 212, 234, 250, 0],
    [611, 220, 231, 252, 256, 0], [626, 268, 317, 392, 394, 1], [641, 250, 270, 320, 328, 1], [653, 240, 270, 272, 290, 1],
    [668, 268, 270, 332, 348, 0], [680, 322, 330, 372, 374, 0], [695, 330, 352, 372, 374, 1], [707, 326, 332, 352, 378, 1],
    [722, 314, 334, 370, 402, 0], [737, 350, 365, 398, 398, 0], [749, 376, 381, 398, 406, 1], [764, 322, 334, 383, 396, 1],
    [776, 298, 308, 334, 336, 1], [791, 290, 305, 324, 330, 0], [803, 318, 322, 356, 362, 0], [818, 334, 354, 372, 376, 0],
    [833, 332, 340, 372, 374, 1], [845, 338, 340, 354, 378, 0], [860, 340, 352, 380, 432, 0], [872, 332, 378, 441, 448, 0],
    [887, 430, 440, 498, 514, 0], [899, 446, 453, 498, 506, 1], [914, 444, 453, 485, 504, 0], [929, 456, 485, 491, 506, 0],
    [941, 478, 489, 507, 507, 0], [956, 494, 504, 545, 558, 0], [968, 538, 543, 552, 564, 0], [983, 516, 552, 592, 594, 0],
    [995, 574, 590, 623, 624, 0], [1010, 618, 621, 664, 664, 0], [1025, 660, 663, 723, 723, 0], [1037, 658, 669, 682, 690, 1],
    [1052, 632, 639, 670, 672, 1], [1064, 637, 639, 723, 723, 0], [1079, 672, 675, 723, 723, 1], [1091, 640, 642, 678, 686, 1],
    [1106, 616, 621, 650, 656, 1], [1118, 574, 597, 623, 628, 1], [1133, 564, 588, 600, 626, 1], [1148, 570, 588, 602, 616, 0],
    [1160, 531, 532, 602, 606, 1]
];

function drawCandles(data, originX, originY) {
    data.forEach(([cx, high, top, bottom, low, up]) => {
        const x = Math.floor(originX + cx / 3);
        const cls = up ? 'up' : 'down';
        add('candles', 'rect', { x: x, y: originY + high / 3, width: 1, height: (low - high) / 3, class: cls });
        add('candles', 'rect', { x: x - 1, y: originY + top / 3, width: 3, height: (bottom - top) / 3, class: cls });
    });
}

drawCandles(august, 50, 440);
drawCandles(september, 400, 330);
```
